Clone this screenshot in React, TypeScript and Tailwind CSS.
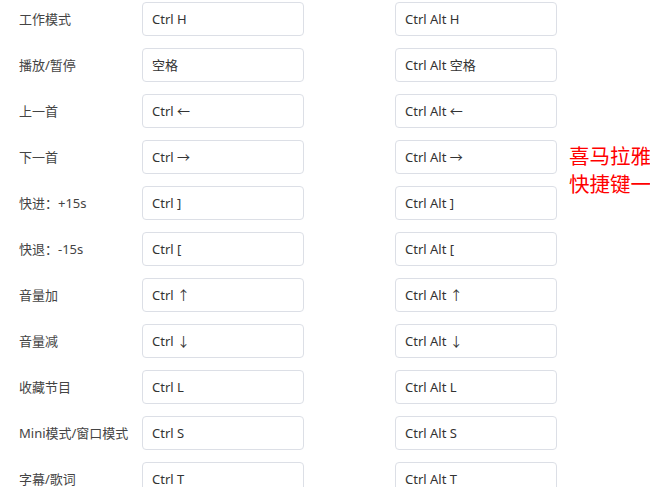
import React from "react";

const rows: [string, string, string][] = [
  ["工作模式", "Ctrl H", "Ctrl Alt H"],
  ["播放/暂停", "空格", "Ctrl Alt 空格"],
  ["上一首", "Ctrl ←", "Ctrl Alt ←"],
  ["下一首", "Ctrl →", "Ctrl Alt →"],
  ["快进：+15s", "Ctrl ]", "Ctrl Alt ]"],
  ["快退：-15s", "Ctrl [", "Ctrl Alt ["],
  ["音量加", "Ctrl ↑", "Ctrl Alt ↑"],
  ["音量减", "Ctrl ↓", "Ctrl Alt ↓"],
  ["收藏节目", "Ctrl L", "Ctrl Alt L"],
  ["Mini模式/窗口模式", "Ctrl S", "Ctrl Alt S"],
  ["字幕/歌词", "Ctrl T", "Ctrl Alt T"],
];

const font = {
  fontFamily: '"Noto Sans", "Noto Sans CJK SC", sans-serif',
};

export default function App() {
  return (
    <div
      className="relative w-[650px] h-[487px] overflow-hidden bg-white"
      style={font}
    >
      <div className="flex flex-col gap-3 pt-[2px]">
        {rows.map(([label, a, b]) => (
          <div key={label} className="flex items-center h-[34px]">
            <div className="w-[142px] pl-[19px] pt-px text-[13px] text-[#444] whitespace-nowrap">
              {label}
            </div>
            <div className="w-[162px] h-[34px] flex items-center px-[9px] pt-px border border-[#dcdfe6] rounded-[4px] text-[13px] text-[#333]">
              {a}
            </div>
            <div className="w-[91px]" />
            <div className="w-[162px] h-[34px] flex items-center px-[9px] pt-px border border-[#dcdfe6] rounded-[4px] text-[13px] text-[#333]">
              {b}
            </div>
          </div>
        ))}
      </div>
      <div className="absolute left-[569px] top-[142px] text-[20.5px] leading-[28px] text-[#ff0000] whitespace-nowrap">
        <div>喜马拉雅</div>
        <div>快捷键一</div>
      </div>
    </div>
  );
}
